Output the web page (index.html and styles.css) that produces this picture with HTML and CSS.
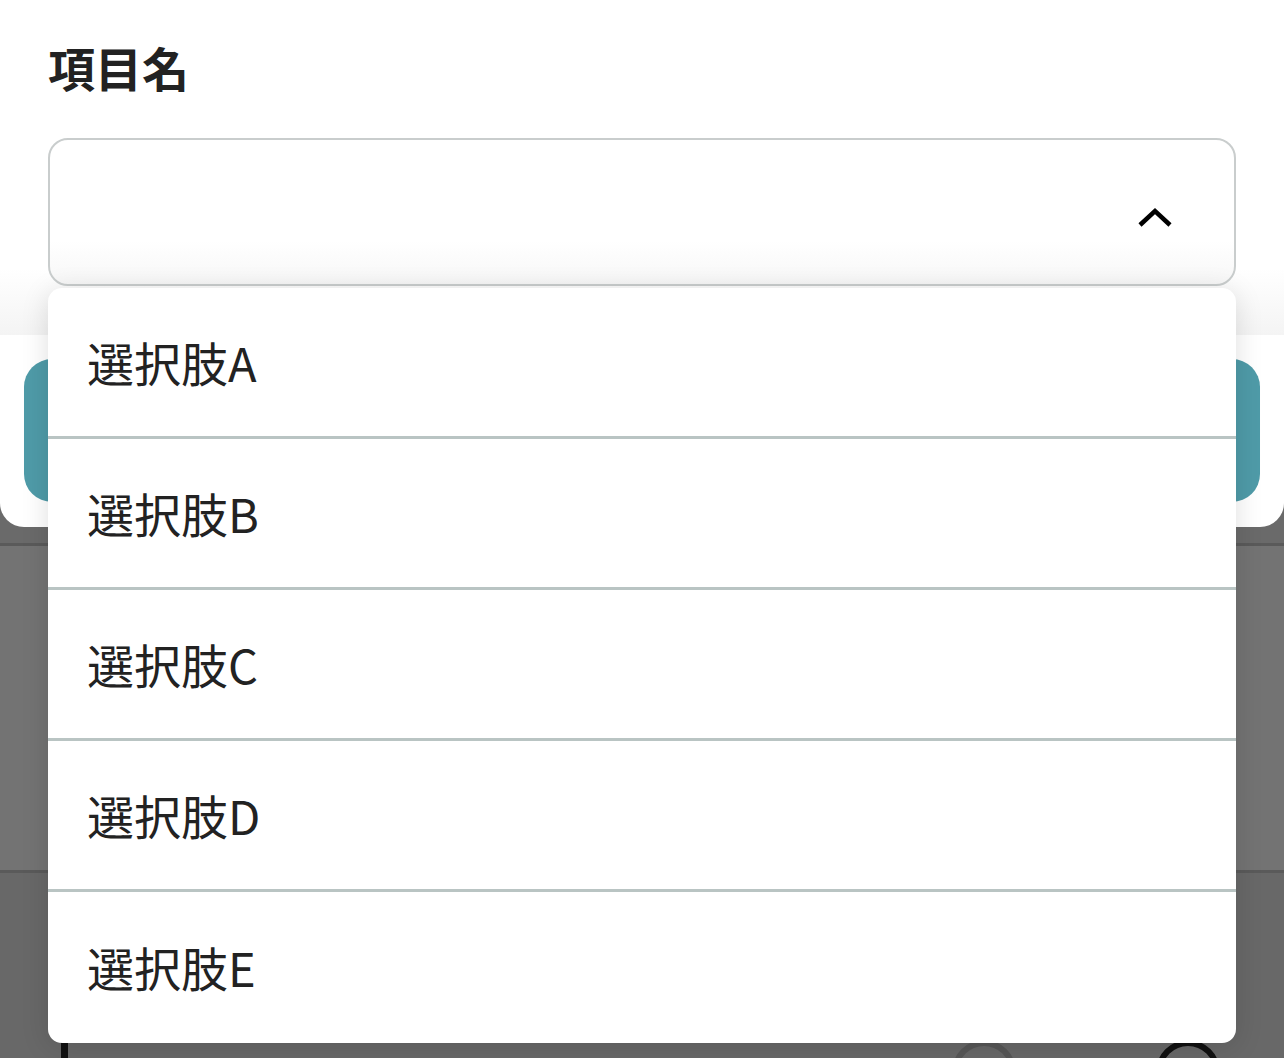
FILE: index.html
```html
<!DOCTYPE html>
<html lang="ja">
<head>
    <meta charset="UTF-8">
    <meta name="viewport" content="width=device-width, initial-scale=1.0">
    <title>項目名</title>
    <link rel="stylesheet" href="styles.css">
</head>
<body>
    <div class="sheet">
        <section class="field">
            <h2 class="field-label">項目名</h2>
            <div class="select-wrap">
                <div class="select">
                    <svg class="chevron" width="36" height="22" viewBox="0 0 36 22">
                        <polyline points="3,19 18,5 33,19" fill="none" stroke="#000" stroke-width="4.5"/>
                    </svg>
                </div>
                <ul class="options">
                    <li>選択肢A</li>
                    <li>選択肢B</li>
                    <li>選択肢C</li>
                    <li>選択肢D</li>
                    <li>選択肢E</li>
                </ul>
            </div>
        </section>
        <div class="actions">
            <button class="primary-btn"></button>
        </div>
    </div>

    <div class="backdrop">
        <div class="row row-top"></div>
        <div class="row row-mid"></div>
        <div class="row row-bottom">
            <span class="bar"></span>
            <div class="stepper">
                <span class="step step-minus"></span>
                <span class="step step-plus"></span>
            </div>
        </div>
    </div>
</body>
</html>
```

FILE: styles.css
```css
body {
    margin: 0;
    font-family: "Noto Sans CJK JP", "Noto Sans", sans-serif;
    color: #222;
    background-color: #737373;
    overflow: hidden;
}
.sheet {
    position: relative;
    z-index: 2;
}
.field {
    height: 335px;
    box-sizing: border-box;
    padding: 36px 48px 0;
    background: linear-gradient(to bottom, #fff 80%, #f4f4f4 100%);
}
.field-label {
    margin: 0;
    font-size: 47px;
    line-height: 62px;
    font-weight: 700;
    color: #222;
}
.select-wrap {
    position: relative;
    margin-top: 40px;
}
.select {
    height: 148px;
    box-sizing: border-box;
    border: 2px solid #c9cdcd;
    border-radius: 20px;
    background: linear-gradient(to bottom, #fff 70%, #f7f7f7 100%);
    display: flex;
    align-items: center;
    justify-content: flex-end;
    padding-right: 61px;
}
.chevron {
    display: block;
    margin-top: 10px;
}
.options {
    position: absolute;
    top: 150px;
    left: 0;
    right: 0;
    margin: 0;
    padding: 0;
    list-style: none;
    background-color: #fff;
    border-radius: 14px;
    box-shadow: 0 4px 28px rgba(0, 0, 0, 0.13);
    z-index: 5;
}
.options li {
    height: 151px;
    box-sizing: border-box;
    display: flex;
    align-items: center;
    padding-left: 39px;
    padding-bottom: 2px;
    font-size: 47px;
    color: #222;
    border-bottom: 3px solid #b9c4c3;
}
.options li:last-child {
    border-bottom: none;
    height: 151px;
}
.actions {
    height: 192px;
    box-sizing: border-box;
    padding: 24px 24px 25px;
    background-color: #fff;
    border-radius: 0 0 24px 24px;
}
.primary-btn {
    display: block;
    width: 100%;
    height: 143px;
    border: none;
    border-radius: 28px;
    background-color: #4f9ba8;
}
.backdrop {
    margin-top: -24px;
    padding-top: 24px;
    background-color: #6a6a6a;
}
.row {
    border-bottom: 3px solid #5a5a5a;
    background-color: #737373;
}
.row-top {
    height: 16px;
    background-color: #6a6a6a;
}
.row-mid {
    height: 324px;
}
.row-bottom {
    height: 260px;
    border-bottom: none;
    display: flex;
    align-items: flex-start;
    justify-content: space-between;
    padding: 167px 64px 0 61px;
    background-color: #686868;
}
.bar {
    width: 7px;
    height: 60px;
    background-color: #111;
}
.stepper {
    display: flex;
    gap: 140px;
}
.step {
    width: 64px;
    height: 64px;
    box-sizing: border-box;
    border-radius: 50%;
    border: 6px solid #575757;
    position: relative;
}
.step::before {
    content: "";
    position: absolute;
    left: 12px;
    right: 12px;
    top: 23px;
    height: 7px;
    background-color: #555;
}
.step-plus {
    border-color: #111;
}
.step-plus::before {
    background-color: #111;
}
.step-plus::after {
    content: "";
    position: absolute;
    top: 12px;
    bottom: 12px;
    left: 23px;
    width: 7px;
    background-color: #111;
}
```
